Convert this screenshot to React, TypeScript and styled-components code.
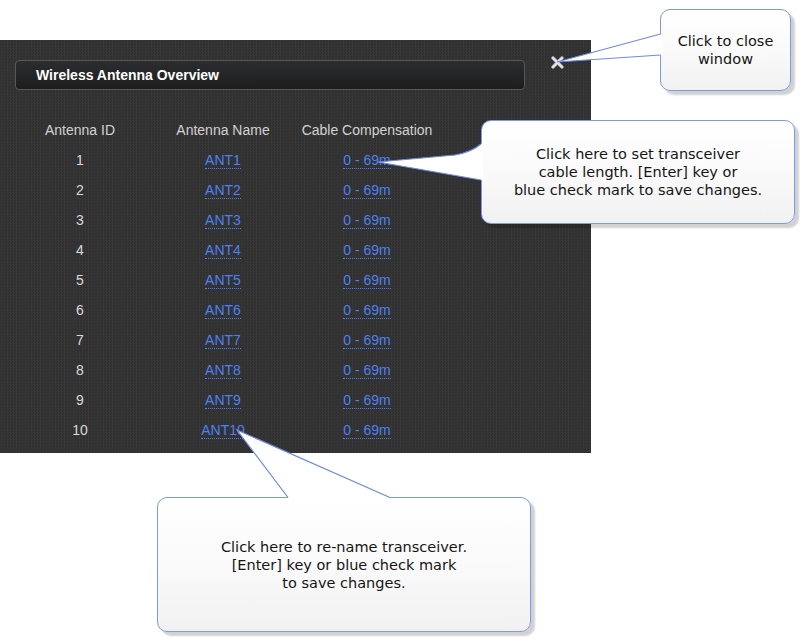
import React from "react";
import styled, { createGlobalStyle } from "styled-components";

interface CalloutProps {
  left: number;
  top: number;
  width: number;
  height: number;
}

const GlobalStyle = createGlobalStyle`
  html, body {
    margin: 0;
    padding: 0;
    background: #ffffff;
  }
`;

const Page = styled.div`
  position: relative;
  width: 808px;
  height: 644px;
  overflow: hidden;
  background: #ffffff;
  font-family: "Liberation Sans", Arial, sans-serif;
`;

const Panel = styled.div`
  margin-top: 40px;
  width: 591px;
  height: 413px;
  box-sizing: border-box;
  padding: 20px 0 0 15px;
  background-color: #333333;
  background-image: repeating-conic-gradient(#363636 0 25%, #2f2f2f 0 50%);
  background-size: 3px 3px;
`;

const TopRow = styled.div`
  display: flex;
  align-items: flex-start;
`;

const TitleBar = styled.div`
  width: 510px;
  height: 30px;
  box-sizing: border-box;
  display: flex;
  align-items: center;
  padding-left: 20px;
  border: 1px solid #585858;
  border-radius: 4px;
  background: linear-gradient(#2c2d2e, #1c1d1f);
  color: #ffffff;
  font-weight: bold;
  font-size: 14px;
`;

const CloseButton = styled.div`
  margin: -5px 0 0 26px;
  width: 13px;
  height: 13px;
  cursor: pointer;
`;

const Grid = styled.div`
  display: grid;
  grid-template-columns: 130px 156px 132px;
  grid-auto-rows: 30px;
  margin-top: 25px;
  font-size: 14px;
`;

const HeadCell = styled.div`
  display: flex;
  align-items: center;
  justify-content: center;
  color: #d2d2d2;
  white-space: nowrap;
`;

const Cell = styled.div`
  display: flex;
  align-items: center;
  justify-content: center;
  color: #dadada;
`;

const EditLink = styled.span`
  display: inline-block;
  line-height: 16px;
  color: #4d80f2;
  border-bottom: 1px dotted #4d80f2;
  cursor: pointer;
`;

const Callout = styled.div<CalloutProps>`
  position: absolute;
  left: ${({ left }) => left}px;
  top: ${({ top }) => top}px;
  width: ${({ width }) => width}px;
  height: ${({ height }) => height}px;
  box-sizing: border-box;
  display: flex;
  align-items: center;
  justify-content: center;
  text-align: center;
  border: 1px solid #7e97ea;
  border-radius: 10px;
  background: linear-gradient(#ffffff 0%, #fafafa 50%, #f1f1f1 100%);
  box-shadow: 4px 4px 2px rgba(0, 0, 0, 0.18);
  font-family: "DejaVu Sans", Verdana, sans-serif;
  font-size: 14.5px;
  line-height: 18px;
  color: #151515;
`;

const Tails = styled.svg`
  position: absolute;
  left: 0;
  top: 0;
  width: 808px;
  height: 644px;
  pointer-events: none;
`;

const antennas = Array.from({ length: 10 }, (_, i) => i + 1);

const App: React.FC = () => {
  return (
    <Page>
      <GlobalStyle />
      <Panel>
        <TopRow>
          <TitleBar>Wireless Antenna Overview</TitleBar>
          <CloseButton>
            <svg width="13" height="13" viewBox="0 0 13 13">
              <path
                d="M2 2 L11 11 M11 2 L2 11"
                stroke="#9a9aa0"
                strokeWidth="3.6"
                strokeLinecap="round"
              />
              <path
                d="M2 2 L11 11 M11 2 L2 11"
                stroke="#e4e4ea"
                strokeWidth="2.4"
                strokeLinecap="round"
              />
            </svg>
          </CloseButton>
        </TopRow>
        <Grid>
          <HeadCell>Antenna ID</HeadCell>
          <HeadCell>Antenna Name</HeadCell>
          <HeadCell>Cable Compensation</HeadCell>
          {antennas.map((n) => (
            <React.Fragment key={n}>
              <Cell>{n}</Cell>
              <Cell>
                <EditLink>ANT{n}</EditLink>
              </Cell>
              <Cell>
                <EditLink>0 - 69m</EditLink>
              </Cell>
            </React.Fragment>
          ))}
        </Grid>
      </Panel>

      <Callout left={660} top={9} width={131} height={82}>
        Click to close
        <br />
        window
      </Callout>
      <Callout left={481} top={120} width={314} height={104}>
        <div>
          Click here to set transceiver
          <br />
          cable length. [Enter] key or
          <br />
          blue check mark to save changes.
        </div>
      </Callout>
      <Callout left={157} top={497} width={374} height={135}>
        <div>
          Click here to re-name transceiver.
          <br />
          [Enter] key or blue check mark
          <br />
          to save changes.
        </div>
      </Callout>

      {/* callout pointers, drawn over the box borders */}
      <Tails viewBox="0 0 808 644">
        <polygon points="557,62 660.5,34 662.5,34 662.5,55 660.5,55" fill="#ffffff" />
        <polyline points="660.5,34 557,62 660.5,55" fill="none" stroke="#6f8ae6" strokeWidth="1.2" />

        <path d="M481 144 Q472 152 455 155 L378 162 L481 180 L483 180 L483 144 Z" fill="#ffffff" />
        <path d="M481 144 Q472 152 455 155 L378 162 L481 180" fill="none" stroke="#6f8ae6" strokeWidth="1.2" />

        <polygon points="237,430 288,497.5 288,499.5 390,499.5 390,497.5" fill="#ffffff" />
        <polyline points="288,497.5 237,430 390,497.5" fill="none" stroke="#6f8ae6" strokeWidth="1.2" />
      </Tails>
    </Page>
  );
};

export default App;
